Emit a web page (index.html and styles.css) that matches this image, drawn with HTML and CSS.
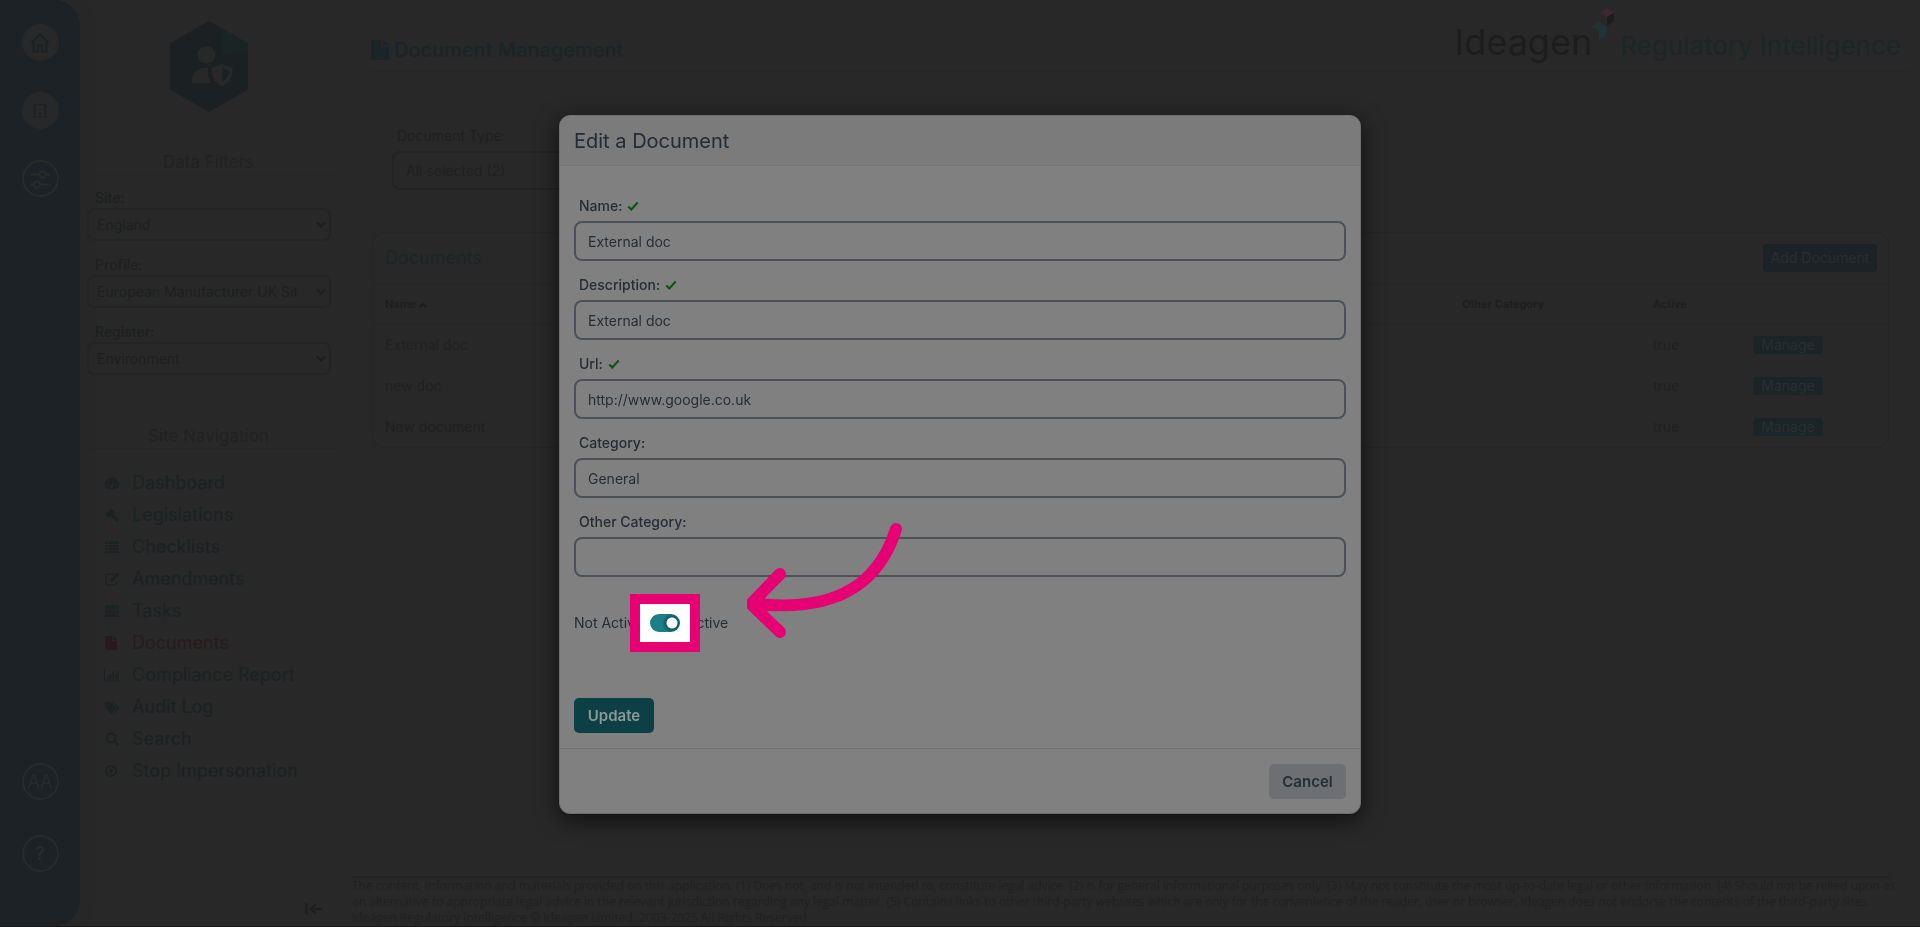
FILE: index.html
```html
<!DOCTYPE html>
<html lang="en">
<head>
<meta charset="utf-8">
<title>Document Management</title>
<link rel="stylesheet" href="styles.css">
</head>
<body>
<div class="app">
  <nav class="rail" aria-label="Products">
    <button class="rail-btn solid" aria-label="Home"><svg viewBox="0 0 20 20" width="20" height="20"><path d="M1.2 10.2 10 1.5l8.800 8.700M3.500 8.500V18.800h4.500v-6.300h4v6.300h4.500V8.500" /></svg></button>
    <button class="rail-btn solid" aria-label="Training"><svg viewBox="0 0 20 20" width="18" height="18"><path d="M4 11V4.500q0-1.500 1.500-1.500h9q1.500 0 1.500 1.500V11"/><path class="fill" d="M2.700 12.500a1.300 1.300 0 1 1 2.600 0 1.300 1.300 0 0 1-2.600 0M8.700 12.500a1.300 1.300 0 1 1 2.600 0 1.300 1.300 0 0 1-2.600 0M14.700 12.500a1.300 1.300 0 1 1 2.600 0 1.300 1.300 0 0 1-2.600 0M1.500 17q2.500-4 5 0zM7.500 17q2.500-4 5 0zM13.500 17q2.500-4 5 0z"/></svg></button>
    <button class="rail-btn" aria-label="Settings"><svg viewBox="0 0 22 20" width="22" height="20"><path d="M1 5.500h9M17 5.500h4M1 15.500h3.500M11.500 15.500H21"/><circle cx="13.500" cy="5.500" r="3.200"/><circle cx="8" cy="15.500" r="3.200"/></svg></button>
    <button class="rail-btn account">AA</button>
    <button class="rail-btn help">?</button>
  </nav>

  <aside class="sidebar">
    <svg class="hex" viewBox="0 0 78 91" width="78" height="91" aria-hidden="true">
      <path fill="#1b2122" d="M39 0 78 22.500v46L39 91 0 68.500v-46z"/>
      <path fill="#1b2424" d="M52 7.500 78 22.500V30L52 34z"/>
      <circle cx="36.500" cy="34" r="8.800" fill="#282828"/>
      <path fill="#282828" d="M22 62v-3c0-7 6-12 12-12h4v4c0 5 1 8 3 11z"/>
      <path fill="#282828" fill-rule="evenodd" d="M52 43l10.500 4c.5 8-3 15-10.500 18.500C44.500 62 41 55 41.500 47zM52 47v14c5-3 7-7 7-11.500z"/>
    </svg>
    <h2 class="side-title filters">Data Filters</h2>
    <form class="filter-form">
      <label for="site">Site:</label>
      <select id="site"><option>England</option></select>
      <label for="profile">Profile:</label>
      <select id="profile"><option>European Manufacturer UK Site</option></select>
      <label for="register">Register:</label>
      <select id="register"><option>Environment</option></select>
    </form>
    <h2 class="side-title navigation">Site Navigation</h2>
    <ul class="menu">
      <li><a href="#"><svg viewBox="0 0 16 16"><path fill-rule="evenodd" d="M8 2.500a7 7 0 0 1 7 7c0 1.700-.5 3.200-1.300 4.500H2.300A8 8 0 0 1 1 9.500a7 7 0 0 1 7-7zM8 4v2h1V4zM3.500 6l1.300 1.300.8-.8L4.300 5.200zM2.500 9v1.200h2V9zM11.500 9v1.200h2V9zM9.500 6 7.600 10a1.600 1.600 0 1 0 1.200.4L10.500 6.500z"/></svg>Dashboard</a></li>
      <li><a href="#"><svg viewBox="0 0 16 16"><path d="M7 1.500 11 5.500 10 6.500 9.500 8l1 .8L15 13l-2 2-4.500-4.500L7.500 9 5.500 11l-4-4 1-1 .8.200L6.200 3.300 6 2.500z"/></svg>Legislations</a></li>
      <li><a href="#"><svg viewBox="0 0 16 16"><path d="M1 2.500h2.500V5H1zM4.500 2.500H15V5H4.500zM1 6h2.500v2H1zM4.500 6H15v2H4.500zM1 9h2.500v2H1zM4.500 9H15v2H4.500zM1 12h2.500v2H1zM4.500 12H15v2H4.500z"/></svg>Checklists</a></li>
      <li><a href="#"><svg viewBox="0 0 16 16"><path d="M10 2.500v1.200H3.500q-1.200 0-1.200 1.200v7.200q0 1.200 1.200 1.200h7.200q1.200 0 1.200-1.200V10l1.200-1.200v3.500q0 2.200-2.200 2.200H3.300Q1 14.500 1 12.300V4.700q0-2.200 2.300-2.200zM13 1.500l2.300 2.300-7 7H6V8.500z"/></svg>Amendments</a></li>
      <li><a href="#"><svg viewBox="0 0 16 16"><path fill-rule="evenodd" d="M1 2.500h14v3.300H1zM9.500 3.500v1H14v-1zM1 6.600h14v3.300H1zM6 7.600v1h8v-1zM1 10.700h14V14H1zM11.500 11.700v1H14v-1z"/></svg>Tasks</a></li>
      <li class="current"><a href="#" aria-current="page"><svg viewBox="0 0 16 16"><path d="M1 1h7v5h5v9H1zM9 1l4 4H9z"/></svg>Documents</a></li>
      <li><a href="#"><svg viewBox="0 0 16 16"><path d="M1 2v11.500h15v1H0V2zM3 9.500h1.600v3H3zM5.700 7h1.600v5.500H5.700zM8.500 4.500h1.600v8H8.500zM11 6.500h1.600v6H11zM13.200 3.500h1.600v9h-1.600z"/></svg>Compliance Report</a></li>
      <li><a href="#"><svg viewBox="0 0 16 16"><path fill-rule="evenodd" d="M1 3h5l6 6-5 5.500-6-6.500zM3.500 4.300a1 1 0 1 0 0 2 1 1 0 0 0 0-2zM8 3l7.500 6-5 5.500-1-.8L13.300 9 7 3z"/></svg>Audit Log</a></li>
      <li><a href="#"><svg viewBox="0 0 16 16"><path fill-rule="evenodd" d="M7 1.500a5.500 5.500 0 0 1 4.600 8.600L15 13.500 13.500 15l-3.400-3.400A5.500 5.500 0 1 1 7 1.500zm0 2a3.500 3.500 0 1 0 0 7 3.500 3.500 0 0 0 0-7z"/></svg>Search</a></li>
      <li><a href="#"><svg viewBox="0 0 16 16"><path fill-rule="evenodd" d="M7 2a6 6 0 1 1 0 12A6 6 0 0 1 7 2zm0 1.800a4.200 4.200 0 1 0 0 8.400 4.200 4.200 0 0 0 0-8.400zM7 6a2 2 0 1 1 0 4 2 2 0 0 1 0-4z"/></svg>Stop Impersonation</a></li>
    </ul>
    <button class="collapse" aria-label="Collapse sidebar"><svg viewBox="0 0 18 14" width="18" height="14"><path d="M1.500 1v12M17 7H6M10.500 2.500 6 7l4.500 4.500"/></svg></button>
  </aside>

  <main class="main">
    <header class="page-head">
      <svg class="file" viewBox="0 0 18 20" width="18" height="20" aria-hidden="true"><path d="M0 0h10.500v7H18v13H0zM12 0l6 5.500h-6z"/></svg>
      <h1>Document Management</h1>
      <div class="brand">
        <span class="brand-name">Ideagen</span>
        <svg class="cubes" viewBox="0 0 24 34" width="24" height="34" aria-hidden="true">
          <path fill="#3e2730" d="M8 5.500 15 1l7 4.500-7 4.500z"/><path fill="#1d1d1d" d="M15 10l7-4.500V14l-7 5z"/>
          <path fill="#223235" d="M0 19.500 7 15l7 4.500L7 24z"/><path fill="#203538" d="M7 24l7-4.500V28l-7 5z"/>
        </svg>
        <span class="brand-product">Regulatory Intelligence</span>
      </div>
    </header>

    <section class="card search-card">
      <label for="type">Document Type:</label>
      <input id="type" type="text" value="All selected (2)" readonly>
    </section>

    <section class="card docs">
      <div class="docs-head"><h2>Documents</h2><button class="add">Add Document</button></div>
      <table>
        <colgroup><col class="c-name"><col class="c-other"><col class="c-active"><col></colgroup>
        <thead><tr><th>Name <svg viewBox="0 0 8 6" width="8" height="6"><path d="M1 5l3-3 3 3"/></svg></th><th>Other Category</th><th>Active</th><th></th></tr></thead>
        <tbody>
          <tr><td>External doc</td><td></td><td>true</td><td><button class="manage">Manage</button></td></tr>
          <tr><td>new doc</td><td></td><td>true</td><td><button class="manage">Manage</button></td></tr>
          <tr><td>New document</td><td></td><td>true</td><td><button class="manage">Manage</button></td></tr>
        </tbody>
      </table>
    </section>

    <footer class="legal">
      The content, information and materials provided on this application. (1) Does not, and is not intended to, constitute legal advice. (2) Is for general informational purposes only. (3) May not constitute the most up-to-date legal or other information. (4) Should not be relied upon as<br>
      an alternative to appropriate legal advice in the relevant jurisdiction regarding any legal matter. (5) Contains links to other third-party websites which are only for the convenience of the reader, user or browser. Ideagen does not endorse the contents of the third-party sites.<br>
      Ideagen Regulatory Intelligence © Ideagen Limited. 2003-2025 All Rights Reserved
    </footer>
  </main>
</div>

<div class="overlay">
  <form class="modal" role="dialog" aria-labelledby="modal-title">
    <header class="modal-head"><h2 id="modal-title">Edit a Document</h2></header>
    <div class="modal-body">
      <div class="field"><label for="name">Name: <svg class="tick" viewBox="0 0 12 10" width="12" height="10"><path d="M1.300 5.500 4.300 8.500 10.700 1.500"/></svg></label><input id="name" type="text" value="External doc"></div>
      <div class="field"><label for="desc">Description: <svg class="tick" viewBox="0 0 12 10" width="12" height="10"><path d="M1.300 5.500 4.300 8.500 10.700 1.500"/></svg></label><input id="desc" type="text" value="External doc"></div>
      <div class="field"><label for="url">Url: <svg class="tick" viewBox="0 0 12 10" width="12" height="10"><path d="M1.300 5.500 4.300 8.500 10.700 1.500"/></svg></label><input id="url" type="text" value="http://www.google.co.uk"></div>
      <div class="field"><label for="cat">Category:</label><input id="cat" type="text" value="General"></div>
      <div class="field"><label for="other">Other Category:</label><input id="other" type="text"></div>
      <div class="switch-row">
        <span>Not Active</span>
        <span class="spot"><input id="active" class="switch" type="checkbox" checked></span>
        <label for="active">Active</label>
      </div>
      <button class="btn update" type="button">Update</button>
    </div>
    <footer class="modal-foot"><button class="btn cancel" type="button">Cancel</button></footer>
    <svg class="arrow" viewBox="0 0 160 120" width="160" height="120" aria-hidden="true"><path d="M149 9C129 73 78 91 10 84M33 54 4 84l29 28"/></svg>
  </form>
</div>
</body>
</html>
```

FILE: styles.css
```css
* { box-sizing: border-box; }
body {
  margin: 0;
  background: #282828;
  color: #1e1f20;
  font: 14px/20px Inter, "Liberation Sans", sans-serif;
}
h1, h2, ul { margin: 0; padding: 0; font-weight: 400; }
button, input, select { font: inherit; color: inherit; margin: 0; }
button { border: 0; padding: 0; background: none; }

.app {
  display: grid;
  grid-template-columns: 80px 272px 1fr;
  min-height: 100vh;
  border-bottom: 1px solid #171717;
}

/* icon rail */
.rail {
  display: flex;
  flex-direction: column;
  align-items: center;
  gap: 31px;
  padding: 24px 0 54px;
  background: #1c2225;
  border-radius: 0 26px 26px 0;
  box-shadow: 4px 0 20px rgba(0, 0, 0, .04);
}
.rail-btn {
  display: grid;
  place-items: center;
  width: 37px;
  height: 37px;
  border: 2px solid #282b2c;
  border-radius: 50%;
  color: #282b2c;
}
.rail-btn svg { fill: none; stroke: currentColor; stroke-width: 2; }
.rail-btn .fill { fill: currentColor; stroke: none; }
.rail-btn.solid { background: #282828; border-color: #282828; color: #1c2225; }
.account { margin-top: auto; font-size: 18px; }
.help { font-size: 18px; font-weight: 600; margin-top: 4px; }

/* sidebar */
.sidebar {
  display: flex;
  flex-direction: column;
  padding: 21px 16px 10px 7px;
}
.hex { align-self: center; margin-left: -6px; }
.side-title {
  padding: 0 6px 0 0;
  border-bottom: 1px solid #252525;
  color: #222222;
  font-size: 17px;
  line-height: 24px;
  text-align: center;
}
.filters { margin-top: 38px; }
.navigation { margin-top: 35px; }
.filter-form { display: flex; flex-direction: column; width: 244px; padding-top: 13px; }
.filter-form label { padding-left: 8px; line-height: 20px; color: #1e2020; font-weight: 500; }
.filter-form select {
  height: 33px;
  margin-bottom: 14px;
  padding: 0 32px 0 8px;
  border: 2px solid #232425;
  border-radius: 7px;
  appearance: none;
  color: #1e2020;
  background: url("data:image/svg+xml,%3Csvg xmlns='http://www.w3.org/2000/svg' width='10' height='8'%3E%3Cpath d='M1 1.500 5 5.500 9 1.500' fill='none' stroke='%231b1d1e' stroke-width='2'/%3E%3C/svg%3E") no-repeat right 3px center;
}
.menu { list-style: none; padding: 18px 0 0 17px; font-size: 18px; }
.menu a {
  display: flex;
  align-items: center;
  gap: 12px;
  height: 32px;
  color: #1b2223;
  text-decoration: none;
}
.menu svg { width: 16px; height: 16px; fill: currentColor; }
.menu .current a { color: #271b1e; }
.collapse { align-self: flex-end; margin: auto 13px 0 0; line-height: 0; }
.collapse svg { fill: none; stroke: #1c1e1f; stroke-width: 2; }

/* main column */
.main { display: flex; flex-direction: column; min-width: 0; }
.page-head {
  display: flex;
  align-items: center;
  gap: 5px;
  height: 72px;
  margin: 0 10px 0 19px;
  padding-top: 29px;
  border-bottom: 2px solid #262626;
}
.file { fill: #1b2427; }
h1 { color: #1b2426; font-size: 20px; font-weight: 500; }
.brand { display: flex; align-items: baseline; margin: -11px 9px 0 auto; line-height: 40px; }
.brand-name { color: #1d1d1d; font-size: 36px; }
.cubes { flex: none; align-self: flex-start; margin: -15px 4px 0 0; }
.brand-product { color: #1b2627; font-size: 26px; }

.card { margin: 0 31px 0 20px; border: 1px solid #252525; border-radius: 12px; }
.search-card { display: flex; flex-direction: column; margin-top: 19px; padding: 34px 19px 21px; border-color: #272727; }
.search-card label { padding: 0 5px 5px; color: #202020; }
.search-card input {
  width: 320px;
  height: 39px;
  padding: 0 12px;
  border: 2px solid #222324;
  border-radius: 8px;
  background: transparent;
  color: #202121;
}
.docs { margin-top: 20px; }
.docs-head { display: flex; align-items: center; justify-content: space-between; height: 51px; padding: 0 11px 0 12px; border-bottom: 1px solid #252525; }
.docs h2 { color: #1c2526; font-size: 18px; }
.add { width: 114px; height: 28px; border-radius: 4px; background: #1b2326; color: #2b2e2f; }
table { width: 100%; border-collapse: collapse; table-layout: fixed; }
.c-name { width: 1077px; }
.c-other { width: 191px; }
.c-active { width: 100px; }
th { height: 40px; padding: 0 12px; border-bottom: 1px solid #252525; color: #1d1e1f; font-size: 11px; font-weight: 600; text-align: left; }
th svg { fill: none; stroke: currentColor; stroke-width: 2; }
td { height: 41px; padding: 0 12px; color: #202121; }
.manage { display: block; width: 70px; height: 18px; border-radius: 4px; background: #1b2426; color: #283030; line-height: 18px; }

.legal { margin: auto 30px 0 0; border-top: 2px solid #242424; color: #212121; font: 12px/16px "Open Sans", sans-serif; white-space: nowrap; }

/* dialog */
.overlay { position: fixed; inset: 0; display: flex; align-items: flex-start; justify-content: center; padding-top: 115px; }
.modal {
  position: relative;
  width: 802px;
  border: 1px solid #6e6e6e;
  border-radius: 11px;
  background: #808080;
  color: #252c34;
  box-shadow: 0 6px 22px rgba(0, 0, 0, .6);
}
.modal-head { padding: 13px 14px 12px; border-bottom: 1px solid #747474; border-radius: 11px 11px 0 0; background: #7b7b7b; }
.modal-head h2 { color: #232b34; font-size: 20px; line-height: 24px; }
.modal-body { padding: 30px 14px 15px; }
.field { display: flex; flex-direction: column; gap: 5px; margin-bottom: 14px; }
.field label { padding-left: 5px; font-weight: 500; }
.field input {
  height: 40px;
  padding: 0 12px;
  border: 2px solid #4b5156;
  border-radius: 8px;
  background: #808080;
}
.tick { margin-left: 1px; fill: none; stroke: #0b5310; stroke-width: 2; }
.switch-row { display: flex; align-items: center; gap: 7px; margin-top: 36px; }
.spot { position: relative; display: flex; }
.spot::before {
  content: "";
  position: absolute;
  inset: -20px;
  border: 10px solid #e60073;
  background: #fff;
}
.switch {
  position: relative;
  appearance: none;
  width: 30px;
  height: 18px;
  border-radius: 9px;
  background: radial-gradient(circle at 22px 9px, #fff 5px, #12595f 6px, #1a7f88 10px);
}
.btn { height: 35px; border-radius: 5px; font-size: 15px; font-weight: 600; }
.update { display: block; width: 80px; margin-top: 65px; background: #0d4045; color: #8c9899; }
.cancel { width: 77px; background: #6d6f72; color: #262e37; }
.modal-foot { display: flex; justify-content: flex-end; padding: 15px 14px 14px; border-top: 1px solid #727272; }
.arrow { position: absolute; left: 187px; top: 404px; fill: none; stroke: #e60073; stroke-width: 12; stroke-linecap: round; stroke-linejoin: round; }
```
